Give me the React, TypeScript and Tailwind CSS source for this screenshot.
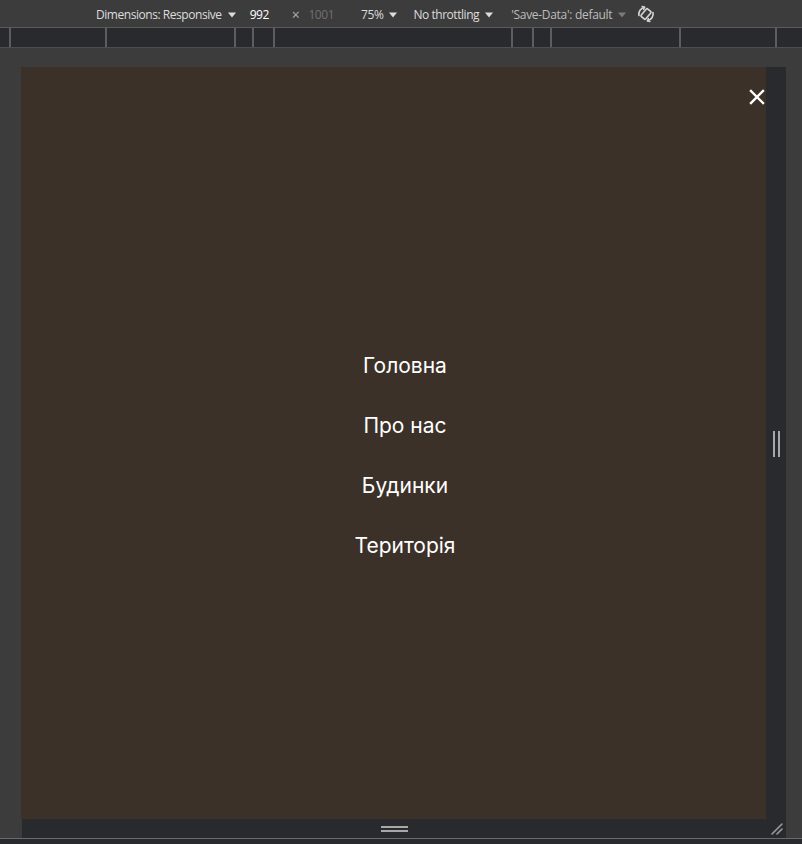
const ticks = [11, 96, 129, 18, 21, 238, 21, 18, 129, 96];

const Caret = ({ dim = false }: { dim?: boolean }) => (
  <svg width="8" height="6" viewBox="0 0 8 6" className="ml-[6px]">
    <path d="M0 0.5h8L4 5.5z" fill={dim ? "#7a7a7a" : "#dcdcdc"} />
  </svg>
);

const menu = ["Головна", "Про нас", "Будинки", "Територія"];

const App = () => {
  return (
    <div className="flex flex-col h-[844px] w-[802px] overflow-hidden bg-[#3c3c3c] font-['Open_Sans',sans-serif]">
      {/* device toolbar */}
      <div className="h-[28px] flex items-center pt-[2px] border-b border-[#5a5a5a] text-[12px] tracking-[-0.45px] text-[#dcdcdc] shrink-0">
        <div className="flex items-center pl-[96px]">
          Dimensions: Responsive
          <Caret />
        </div>
        <span className="ml-[14px] text-white">992</span>
        <span className="ml-[23px] text-[#b0b0b0] text-[14px]">×</span>
        <span className="ml-[9px] text-[#707070]">1001</span>
        <div className="flex items-center ml-[27px]">
          75%
          <Caret />
        </div>
        <div className="flex items-center ml-[16px]">
          No throttling
          <Caret />
        </div>
        <div className="flex items-center ml-[18px] tracking-[-0.3px] text-[#bdbdbd]">
          'Save-Data': default
          <Caret dim />
        </div>
        <svg width="20" height="20" viewBox="0 0 20 20" className="ml-[10px] -mt-[2px]" fill="none" stroke="#d6d6d6" strokeWidth="1.6" strokeLinecap="round" strokeLinejoin="round">
          <rect x="7" y="5" width="6" height="10" rx="1.2" transform="rotate(40 10 10)" />
          <path d="M3 11.5A7 7 0 0 1 8.5 3.2" />
          <path d="M8.5 3.2l-2.3-0.6M8.5 3.2l-0.9 2.1" />
          <path d="M17 8.5A7 7 0 0 1 11.5 16.8" />
          <path d="M11.5 16.8l2.3 0.6M11.5 16.8l0.9-2.1" />
        </svg>
      </div>

      {/* ruler */}
      <div className="h-[20px] flex bg-[#292a2d] border-b border-[#4c4e52] shrink-0">
        {ticks.map((w, i) => (
          <div key={i} className="h-full border-r-2 border-[#5c5d60]" style={{ width: w }} />
        ))}
      </div>

      {/* emulated viewport */}
      <div className="flex-1 pt-[19px] pl-[21px]">
        <div className="flex flex-col w-[765px]">
          <div className="flex">
            <div className="relative w-[745px] h-[752px] bg-[#3c3129] flex flex-col items-center justify-center pl-[23px] pt-[26px]">
              <button className="absolute right-[1px] top-[22px] w-[16px] h-[16px]">
                <svg viewBox="0 0 16 16" width="16" height="16" stroke="#ffffff" strokeWidth="2.4" strokeLinecap="square">
                  <path d="M2 2l12 12M14 2L2 14" />
                </svg>
              </button>
              <nav className="flex flex-col items-center gap-[32px] font-['Inter',sans-serif] text-[21px] leading-[28px] text-white">
                {menu.map((m) => (
                  <a key={m} href="#">
                    {m}
                  </a>
                ))}
              </nav>
            </div>
            <div className="w-[20px] h-[752px] bg-[#292a2d] flex items-center justify-center pt-[2px] gap-[3px]">
              <div className="w-[2px] h-[26px] bg-[#a8a8a8]" />
              <div className="w-[2px] h-[26px] bg-[#a8a8a8]" />
            </div>
          </div>
          <div className="relative h-[19px] ml-[1px] bg-[#292a2d] flex flex-col items-center justify-center gap-[2px] pr-[20px]">
            <div className="w-[27px] h-[2px] bg-[#a8a8a8]" />
            <div className="w-[27px] h-[2px] bg-[#a8a8a8]" />
            <svg width="14" height="14" viewBox="0 0 14 14" className="absolute right-[2px] top-[3px]" stroke="#9a9a9a" strokeWidth="1.6" strokeLinecap="round">
              <path d="M2 12L12 2M7 12l5-5" />
            </svg>
          </div>
        </div>
      </div>

      <div className="h-[6px] border-t border-[#6a6a6a] bg-[#292a2d] shrink-0" />
    </div>
  );
};

export default App;
